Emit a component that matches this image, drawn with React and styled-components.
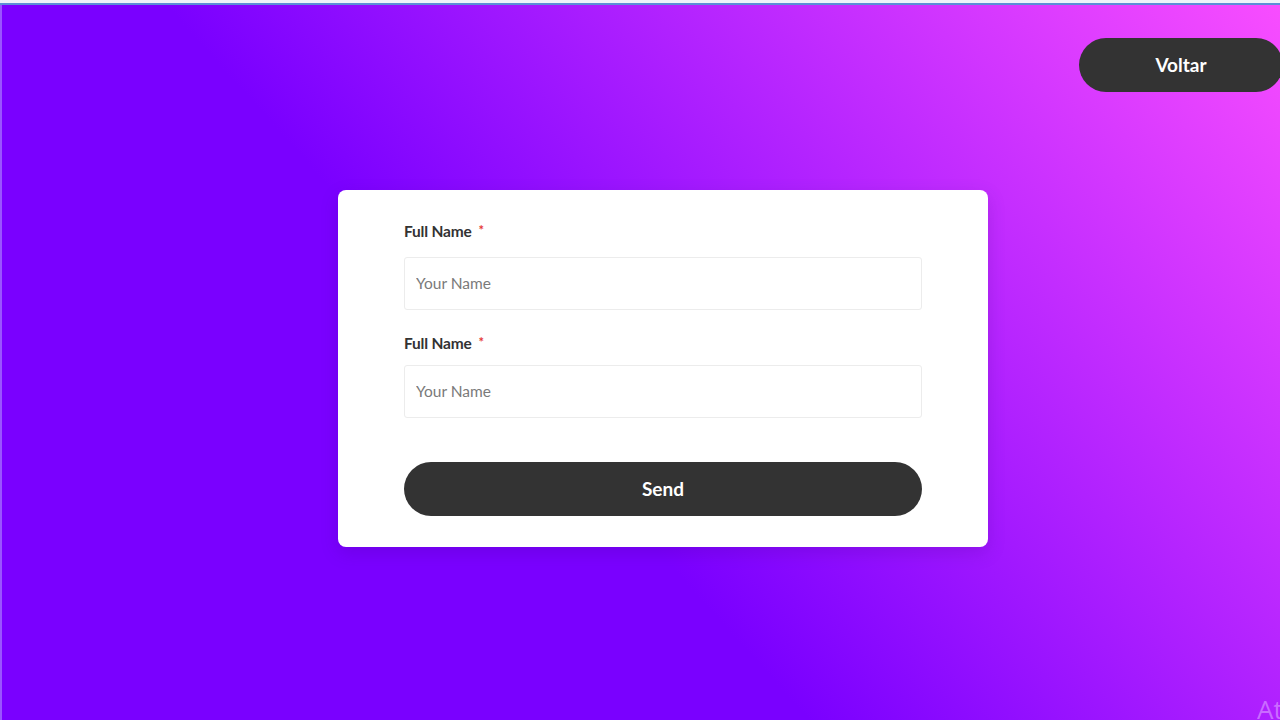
import styled, { createGlobalStyle } from "styled-components";

const GlobalStyle = createGlobalStyle`
  * { box-sizing: border-box; }
  html, body { margin: 0; padding: 0; }
  body {
    font-family: Lato, "Open Sans", sans-serif;
    overflow: hidden;
  }
`;

const Page = styled.div`
  width: 1280px;
  height: 720px;
  display: flex;
  flex-direction: column;
  position: relative;
  overflow: hidden;
`;

const BrowserStrip = styled.div`
  height: 5px;
  flex-shrink: 0;
  background: #eef3f9;
  border-bottom: 2px solid #5b8fd6;
`;

const Stage = styled.main`
  flex: 1;
  display: flex;
  flex-direction: column;
  background: linear-gradient(48deg, #7a00ff 42%, #f84dff 100%);
  border-left: 2px solid #9a55ff;
`;

const TopBar = styled.header`
  display: flex;
  justify-content: flex-end;
  padding-top: 33px;
  margin-right: -3px;
`;

const BackButton = styled.button`
  width: 204px;
  height: 54px;
  border: none;
  border-radius: 27px;
  background: #333333;
  color: #fff;
  font-family: Lato, sans-serif;
  font-weight: 700;
  font-size: 19px;
  cursor: pointer;
  padding: 0 0 2px 0;
`;

const Card = styled.form`
  width: 650px;
  margin: 98px 0 0 336px;
  background: #fff;
  border-radius: 8px;
  padding: 31px 66px 31px 66px;
  box-shadow: 0 6px 18px rgba(60, 0, 120, 0.18);
  display: flex;
  flex-direction: column;
`;

const Label = styled.label`
  font-size: 15.5px;
  font-weight: 700;
  line-height: 20px;
  letter-spacing: -0.2px;
  color: #333;
  margin-top: ${(p) => (p.$first ? "0" : "23px")};
  margin-bottom: ${(p) => (p.$first ? "16px" : "12px")};
  display: flex;
  align-items: center;
`;

const Required = styled.span`
  color: #e53935;
  margin-left: 7px;
  font-size: 13px;
  position: relative;
  top: -1px;
`;

const Input = styled.input`
  width: 100%;
  height: 53px;
  border: 1px solid #ececec;
  border-radius: 3px;
  padding: 0 11px 2px;
  font-family: Lato, sans-serif;
  font-size: 15.5px;
  color: #333;
  outline: none;
  &::placeholder { color: #7a7a7a; }
`;

const SendButton = styled.button`
  margin-top: 44px;
  height: 54px;
  width: 100%;
  border: none;
  border-radius: 27px;
  background: #333333;
  color: #fff;
  font-family: Lato, sans-serif;
  font-weight: 700;
  font-size: 19px;
  cursor: pointer;
  padding: 0 0 2px 0;
`;

const Watermark = styled.div`
  position: absolute;
  left: 1257px;
  bottom: -7px;
  font-family: "Open Sans", sans-serif;
  font-size: 26px;
  color: rgba(255, 255, 255, 0.35);
  white-space: nowrap;
`;

export default function App() {
  return (
    <Page>
      <GlobalStyle />
      <BrowserStrip />
      <Stage>
        <TopBar>
          <BackButton type="button">Voltar</BackButton>
        </TopBar>
        <Card onSubmit={(e) => e.preventDefault()}>
          <Label $first>
            Full Name<Required>*</Required>
          </Label>
          <Input placeholder="Your Name" />
          <Label>
            Full Name<Required>*</Required>
          </Label>
          <Input placeholder="Your Name" />
          <SendButton type="submit">Send</SendButton>
        </Card>
      </Stage>
      <Watermark>Ativar o Windows</Watermark>
    </Page>
  );
}
